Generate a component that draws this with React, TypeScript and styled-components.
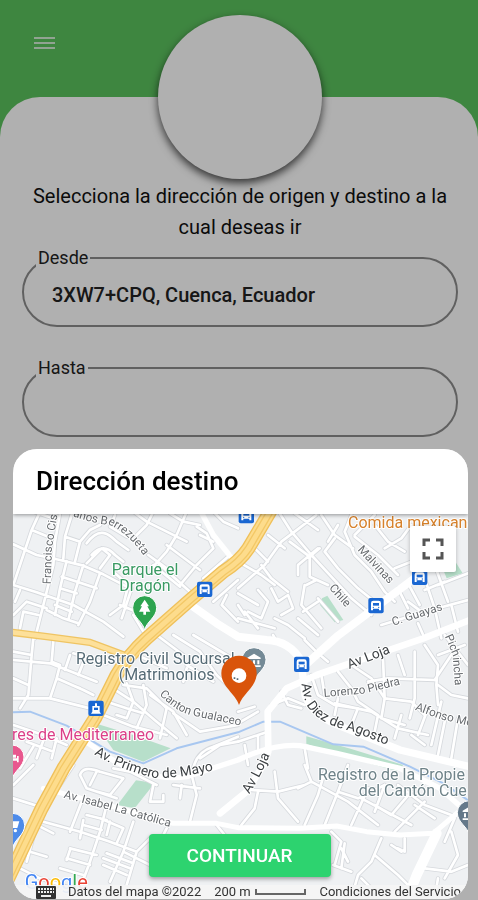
import React from "react";
import styled, { createGlobalStyle } from "styled-components";

const GlobalStyle = createGlobalStyle`
  * { box-sizing: border-box; }
  body {
    margin: 0;
    background: #5bc25e;
    font-family: Roboto, "Liberation Sans", sans-serif;
    color: #000;
  }
`;

const Page = styled.main`
  min-height: 100vh;
  display: flex;
  flex-direction: column;
`;

const TopBar = styled.header`
  height: 97px;
  padding: 31px 32px;
`;

const MenuButton = styled.button`
  display: flex;
  padding: 0;
  border: 0;
  background: none;
  color: #d3ecd4;
`;

const Sheet = styled.section`
  flex: 1;
  display: flex;
  flex-direction: column;
  align-items: center;
  padding: 0 20px 24px 22px;
  background: #fff;
  border-radius: 40px 40px 0 0;
`;

const Avatar = styled.div`
  width: 164px;
  height: 164px;
  margin-top: -82px;
  border-radius: 50%;
  background: #fff;
  box-shadow: 0 4px 8px rgba(0, 0, 0, 0.7);
`;

const Prompt = styled.p`
  margin: 2px 0 4px;
  font-size: 20px;
  line-height: 31px;
  text-align: center;
  color: #111;
`;

const Field = styled.fieldset`
  width: 100%;
  height: 80px;
  margin: 0 0 30px;
  padding: 0 12px;
  border: 2px solid #8c8c8c;
  border-radius: 36px;
`;

const FieldName = styled.legend`
  height: 22px;
  padding: 0 2px;
  color: #222;
  font-size: 18px;
  line-height: 22px;
`;

const FieldInput = styled.input`
  width: 100%;
  height: 52px;
  padding: 0 16px;
  border: 0;
  outline: 0;
  background: transparent;
  color: #222;
  font: 500 20px Roboto, "Liberation Sans", sans-serif;
`;

const Backdrop = styled.div`
  position: fixed;
  inset: 0;
  display: flex;
  flex-direction: column;
  justify-content: flex-end;
  padding: 0 10px 1px 13px;
  background: rgba(0, 0, 0, 0.31);
`;

const Dialog = styled.div`
  height: 50vh;
  display: flex;
  flex-direction: column;
  overflow: hidden;
  border-radius: 24px;
  background: #fff;
`;

const DialogHeader = styled.header`
  position: relative;
  z-index: 1;
  flex: none;
  padding: 16px 23px;
  background: #fff;
  box-shadow: 0 1px 4px rgba(0, 0, 0, 0.4);
`;

const DialogTitle = styled.h1`
  margin: 0;
  font-size: 26px;
  line-height: 33px;
  font-weight: 500;
`;

const MapArea = styled.div`
  position: relative;
  flex: 1;
  min-height: 0;
`;

const MapCanvas = styled.svg`
  display: block;
  width: 100%;
  height: 100%;
`;

const FullscreenButton = styled.button`
  position: absolute;
  top: 12px;
  right: 12px;
  display: flex;
  align-items: center;
  justify-content: center;
  width: 46px;
  height: 46px;
  padding: 0;
  border: 0;
  border-radius: 2px;
  background: #fff;
  box-shadow: 0 1px 4px rgba(0, 0, 0, 0.25);
`;

const ContinueButton = styled.button`
  position: absolute;
  bottom: 22px;
  left: 50%;
  width: 182px;
  height: 43px;
  margin-left: -92px;
  border: 0;
  border-radius: 4px;
  background: #2dd36f;
  color: #fff;
  font: 500 19px Roboto, "Liberation Sans", sans-serif;
  box-shadow: 0 2px 4px rgba(0, 0, 0, 0.35);
`;

const Attribution = styled.footer`
  position: absolute;
  right: 0;
  bottom: 0;
  left: 0;
  display: flex;
  align-items: center;
  height: 14px;
  padding: 0 7px 0 23px;
  background: rgba(245, 245, 245, 0.92);
  color: #333;
  font-size: 13px;
  line-height: 14px;
  white-space: nowrap;
`;

const Credits = styled.span`
  margin-left: 12px;
`;

const Scale = styled.span`
  display: flex;
  align-items: center;
  gap: 4px;
  margin-left: 13px;
`;

const ScaleBar = styled.span`
  width: 51px;
  height: 6px;
  border: 2px solid #666;
  border-top: 0;
`;

const Terms = styled.a`
  margin-left: auto;
  color: inherit;
  text-decoration: none;
`;

const Label = styled.text<{ $tone?: string; $size?: number }>`
  font-family: Roboto, "Liberation Sans", sans-serif;
  font-size: ${(p) => p.$size ?? 35}px;
  fill: ${(p) => p.$tone ?? "#666a6e"};
  stroke: #fff;
  stroke-width: 6px;
  stroke-linejoin: round;
  paint-order: stroke;
`;

/* Minor streets, grouped by the district whose origin they are measured from. */
const districts = [
  {
    x: 0,
    y: 0,
    d: `M120 20L95 75 40 240 M40 118L110 150 180 165 250 182 310 208 390 250
      M180 25L165 110 160 180 130 300 105 400 M95 75L145 95 M100 20L160 40
      M40 240L110 262 220 300 310 350 370 395 M200 168L180 250 165 330 M250 180L225 260 205 345 M300 205L270 290 235 360
      M185 215L245 235 290 250 M180 250L230 265 M165 300L215 320
      M215 30L195 95 190 160 M195 95L240 110 270 75 300 60 M240 110L225 170
      M260 115C300 60 330 90 350 110L385 135 M275 150Q310 110 345 150L370 170 M260 175L305 130 330 150 300 190
      M345 30L330 65 380 95 M400 20L440 50 500 80 560 110 M460 20L440 60 410 90
      M560 20L530 90 500 140 455 190 M600 60L550 50 510 25 M590 65L620 85 640 130 590 180 540 240
      M640 110L600 90 M690 150L610 220 M500 120L600 195 M470 170L570 260 M445 150L500 190 M540 245L460 180
      M345 205L385 240 370 300 330 330 M360 300L420 325 M395 250L365 340 M400 330L430 380
      M40 330L80 290 140 310 M60 255L45 290 M140 315L190 340 235 355 M60 370L70 320 115 330
      M640 20L670 50 714 70 M640 290L714 225 M680 270L665 300 714 350`,
  },
  {
    x: 714,
    y: 0,
    d: `M125 25L160 80 220 150 280 215 340 280 400 330 M170 25L240 75 M235 30L170 80 130 110 80 180 0 250
      M0 170L70 210 110 240 M40 120L90 170 M90 90L140 130 M70 180L100 220 150 260
      M155 110L215 155 215 215 270 240 M180 210L180 180 240 130 M245 130L215 155 M205 240L235 225
      M250 30L290 90 345 130 M300 60L270 110 M340 30L320 80 350 150 400 200 440 260 470 290
      M290 100L260 140 300 190 360 250 410 290 M350 90L410 30 M350 95L420 150 480 210
      M440 130L490 100 520 60 M410 60L450 110 500 140 M470 190L520 170 M480 250L510 310 M510 235L545 300
      M200 240L190 300 250 370 M195 320L240 290 M240 280L300 350 M60 255L90 290 70 340 30 320 M100 250L120 290 150 270 165 310 130 330
      M0 265L60 300 M0 300L20 330 M20 320L60 370 M110 340L150 360 200 400 M180 340L240 390 M0 340L110 370
      M430 360L560 320 690 285 M560 220L590 310 M590 180L630 290 M600 240L690 205 M560 255L620 230
      M590 310L610 400 M510 290L550 320 M540 355L560 400 M640 300L660 380`,
  },
  {
    x: 0,
    y: 390,
    d: `M100 10L95 60 85 180 M160 20L155 80 180 90 170 130 150 190 M40 75L150 85 290 140 M40 190L150 190 270 220
      M170 130L250 165 280 180 M210 60L195 105 M215 150L240 160 M220 55L320 85 M255 70L235 120 M95 60L40 50
      M40 130L85 150 M85 180L60 220 M330 155L400 200 470 260 530 310 M380 145L400 200 380 250 350 240
      M320 200L380 220 430 235 M430 150L440 210 410 280 M450 180L520 230 560 300 M500 220L480 310 M370 150L440 160 500 220
      M310 240L400 275 500 300 M520 235L600 290 714 270 M520 0L600 50 650 120 714 180 M580 0L714 80
      M560 90L640 140 M560 100L550 140 M470 0L550 60 M410 60L500 100
      M40 270L130 300 200 330 M140 290L110 370 M80 320L160 350 M100 335L60 400 M170 310L155 370
      M600 370L660 330 714 320 M580 400Q590 350 640 335L714 305`,
  },
  {
    x: 714,
    y: 390,
    d: `M120 25L105 0 M240 55L200 15 M270 80L240 55 M220 120L240 180 290 210 360 220 M250 120L260 180
      M300 110L340 160 360 200 420 240 M340 90L400 130 440 190 M390 140L450 130 590 135 M435 70L440 190 430 250
      M480 60L500 120 M530 50L530 190 515 250 M560 30L600 90 595 150 600 210 M440 190L520 200 560 240
      M300 190L290 240 M360 220L340 270 M290 205L400 230 480 280 570 300 M420 240L410 290 M490 240L470 310 M570 220L540 300
      M430 250L500 270 M610 200L580 330 M600 150L640 180 690 190 M590 135L640 60 M600 60L680 30 M620 0L690 90
      M0 265L60 230 M0 230L50 215 M100 210L150 190 200 210 M130 170L150 210 190 220 M0 320L90 290 M20 330L30 390 M60 300L60 350
      M200 340L210 400 M520 300L560 330 M620 260L600 360 M660 250L640 370`,
  },
  {
    x: 0,
    y: 780,
    d: `M40 60L100 0 M40 100L120 125 M220 0L180 60 M130 170L240 200 330 230 410 260
      M240 30Q250 0 300 20L370 40 330 90 290 80 M240 30L260 70 350 100 M290 20L270 60 M340 10L390 20 470 60
      M460 60L450 110 490 110 490 90 M520 60L600 70 M545 60L540 100 M570 10L590 90 570 170
      M245 110L210 200 M320 120L300 200 270 290 240 370 M260 150L320 165 M250 180L305 195 M250 165L240 220
      M300 160L370 190 350 235 M330 170L320 210 M400 170L370 260 330 350 M210 250L290 270 M200 280L270 300 M180 310L250 330 M210 255L200 285
      M310 280L390 310 M320 265L400 295 M310 300L380 330 M370 260L450 300 M450 220L410 260 380 360 M90 260L140 275 M100 215L80 290 M60 310L120 340 200 365
      M120 185L160 205 M650 180L690 230 M500 190L480 230`,
  },
  {
    x: 714,
    y: 780,
    d: `M40 75L120 80 200 60 M110 20L120 100 180 170 M60 80L50 130 10 180 M200 0L220 50 330 110 420 180
      M220 50L180 70 M260 20L240 90 200 180 M330 0L300 80 260 180 M300 80L360 100 440 60 M390 70L340 180
      M440 60L410 140 M410 120L460 150 520 80 M370 100L520 180 M480 60L560 120 640 150 M560 110L470 200
      M530 120L590 160 M430 220L400 290 360 330 340 400 M280 200L310 230 290 300 M310 250L330 290 M320 235L310 310 M285 300L340 320
      M410 270L480 330 520 370 M500 220L500 260 480 250 M490 260L460 240 M560 310L640 320 690 300 M640 200L660 270 620 340
      M370 340L430 400 M600 340L590 400 M650 160L620 230`,
  },
];

const avenues = [
  { w: 16, d: "M600 15L640 90 700 165" },
  { w: 24, d: "M580 305L650 355 714 395 800 405Q870 408 905 470" },
  { w: 24, d: "M905 490L1010 395 1110 320 1250 215 1310 160" },
  { w: 20, d: "M660 925L740 860 790 780 805 740 803 620 860 550 950 510 1050 475 1270 400 1410 345" },
  { w: 22, d: "M905 480L915 570Q930 620 1000 655L1200 735 1410 785" },
  { w: 16, d: "M230 690L330 760Q450 830 560 815L714 765Q820 715 900 722L1010 745 1200 790 1320 850 1410 930" },
  { w: 15, d: "M130 850L340 905 520 955 650 955 714 968 900 970 1010 963 1100 980 1200 990 1300 985 1400 900" },
  { w: 30, d: "M1310 985L1250 1110 1215 1200" },
];

const mainRoad = "M822 0L745 130Q720 168 670 200L570 285 440 400Q385 450 350 510L285 640 190 790 125 910 25 1120";
const sideRoad = "M20 380L140 395 270 412 385 455";
const laneLines = "M812 0L738 125Q712 165 663 196L564 279 434 393Q378 445 343 506L278 636 183 786 118 906 18 1116 M832 0L753 136Q728 174 678 207L577 292 447 408Q392 457 358 515L293 645 198 795 133 915 33 1125";
const river = "M20 622L90 620 200 662 330 740 430 775 530 730 714 682 790 650 840 650 1000 718 1090 725 1230 785 1330 835 1410 890";

const parks = [
  "M285 655L400 690 512 730 430 770 340 735Z",
  "M919 694L1054 732 1210 780 1190 798 1000 745 919 716Z",
  "M408 826L464 834 404 910 352 900Z",
  "M966 280L982 272 1030 345 1004 352 960 300Z",
  "M1350 145L1388 205 1340 220 1330 195Z",
];

const stops = [
  [614, 253],
  [739, 32],
  [1259, 217],
  [1128, 302],
  [905, 478],
];

const BusStop = ({ x, y }: { x: number; y: number }) => (
  <g transform={`translate(${x} ${y})`}>
    <rect x="-23" y="-23" width="46" height="46" rx="6" fill="#1a67d2" />
    <path d="M-15 14V-8Q-15-15-8-15H8Q15-15 15-8V14H9V9H-9V14Z" fill="#fff" />
    <path d="M-9-8H9V0H-9Z" fill="#1a67d2" />
    <circle cx="-8" cy="5" r="2" fill="#1a67d2" />
    <circle cx="8" cy="5" r="2" fill="#1a67d2" />
  </g>
);

const PlacePin = ({ x, y, tone, children }: { x: number; y: number; tone: string; children: React.ReactNode }) => (
  <g transform={`translate(${x} ${y})`}>
    <path
      d="M0 66C-4 40-36 28-36-2A36 36 0 0 1 36-2C36 28 4 40 0 66Z"
      fill={tone}
      stroke="#fff"
      strokeWidth="3"
    />
    {children}
  </g>
);

const CityMap = () => (
  <MapCanvas viewBox="39 27 1365 1155" preserveAspectRatio="xMidYMid slice" role="img" aria-label="Mapa de Cuenca">
    <defs>
      <path id="francisco" d="M152 238L156 130 180 -15" />
      <path id="berrezueta" d="M218 34Q280 55 330 60Q400 95 445 175" />
      <path id="malvinas" d="M1072 135L1190 262" />
      <path id="chile" d="M986 250L1056 328" />
      <path id="guayas" d="M1180 362L1350 308" />
      <path id="loja" d="M1048 492L1190 436" />
      <path id="piedra" d="M972 576L1090 566 1220 534" />
      <path id="pichincha" d="M1334 394L1358 450 1366 560" />
      <path id="alfonso" d="M1244 614L1320 642 1450 672" />
      <path id="agosto" d="M905 536Q912 600 935 620Q970 660 1060 680L1200 736" />
      <path id="gualaceo" d="M478 568Q530 625 590 634L750 668" />
      <path id="mayo" d="M282 748Q350 790 460 818Q520 825 690 785" />
      <path id="lojasur" d="M748 868Q790 800 820 725" />
      <path id="catolica" d="M190 878L340 918 560 980" />
    </defs>

    <rect x="0" y="0" width="1440" height="1200" fill="#eff1f3" />
    {parks.map((d) => (
      <path key={d} d={d} fill="#b7dfca" />
    ))}
    <g fill="none" strokeLinejoin="round" strokeLinecap="round">
      {districts.map((t) => (
        <path key={t.d} d={t.d} transform={`translate(${t.x} ${t.y})`} stroke="#d6d9dd" strokeWidth="13" />
      ))}
      {districts.map((t) => (
        <path key={t.d} d={t.d} transform={`translate(${t.x} ${t.y})`} stroke="#fff" strokeWidth="8" />
      ))}
      <path d={river} stroke="#a8c7f0" strokeWidth="6" />
      {avenues.map((a) => (
        <path key={a.d} d={a.d} stroke="#fff" strokeWidth={a.w} />
      ))}
      <path d={sideRoad} stroke="#efc463" strokeWidth="22" />
      <path d={mainRoad} stroke="#efc05a" strokeWidth="42" />
      <path d={sideRoad} stroke="#fde09a" strokeWidth="14" />
      <path d={mainRoad} stroke="#fddc8c" strokeWidth="34" />
      <path d={laneLines} stroke="#f3c867" strokeWidth="4" />
    </g>

    <Label><textPath href="#francisco">Francisco Cis</textPath></Label>
    <Label><textPath href="#berrezueta">anos Berrezueta</textPath></Label>
    <Label><textPath href="#malvinas">Malvinas</textPath></Label>
    <Label><textPath href="#chile">Chile</textPath></Label>
    <Label><textPath href="#guayas">C. Guayas</textPath></Label>
    <Label><textPath href="#piedra">Lorenzo Piedra</textPath></Label>
    <Label><textPath href="#pichincha">Pichincha</textPath></Label>
    <Label><textPath href="#alfonso">Alfonso Mo</textPath></Label>
    <Label><textPath href="#gualaceo">Canton Gualaceo</textPath></Label>
    <Label><textPath href="#catolica">Av. Isabel La Católica</textPath></Label>
    <Label $size={41} $tone="#3c4043"><textPath href="#loja">Av Loja</textPath></Label>
    <Label $size={41} $tone="#3c4043"><textPath href="#agosto">Av. Diez de Agosto</textPath></Label>
    <Label $size={41} $tone="#3c4043"><textPath href="#mayo">Av. Primero de Mayo</textPath></Label>
    <Label $size={41} $tone="#3c4043"><textPath href="#lojasur">Av Loja</textPath></Label>

    <Label $size={48} $tone="#3a9a63" textAnchor="middle" x="435" y="210">Parque el</Label>
    <Label $size={48} $tone="#3a9a63" textAnchor="middle" x="435" y="258">Dragón</Label>
    <Label $size={48} $tone="#d6812b" x="1044" y="70">Comida mexicana</Label>
    <Label $size={48} $tone="#566b76" x="228" y="478">Registro Civil Sucursal</Label>
    <Label $size={48} $tone="#566b76" x="356" y="526">(Matrimonios</Label>
    <Label $size={48} $tone="#db3f88" x="36" y="704">res de Mediterraneo</Label>
    <Label $size={48} $tone="#6f8389" x="954" y="824">Registro de la Propie</Label>
    <Label $size={48} $tone="#6f8389" x="1076" y="872">del Cantón Cue</Label>

    {stops.map(([x, y]) => (
      <BusStop key={`${x}-${y}`} x={x} y={y} />
    ))}
    <g transform="translate(288 610)">
      <rect x="-23" y="-23" width="46" height="46" rx="6" fill="#1a67d2" />
      <path d="M-11 10V-7H-3V-15H3V-7H11V10L15 16H-15Z" fill="#fff" />
      <path d="M-6-2H6V5H-6Z" fill="#1a67d2" />
    </g>

    <PlacePin x={434} y={310} tone="#2da44f">
      <path d="M0-26L13-6H8L17 10H4V19H-4V10H-17L-8-6H-13Z" fill="#fff" />
    </PlacePin>
    <PlacePin x={762} y={466} tone="#748a96">
      <path d="M-20-8L0-20 20-8V-4H-20Z M-16 0H-10V12H-16Z M-3 0H3V12H-3Z M10 0H16V12H10Z M-20 15H20V20H-20Z" fill="#fff" />
    </PlacePin>
    <PlacePin x={36} y={758} tone="#e8578e">
      <path d="M-20 14V-13H-15V2H15V-5H20V14H15V9H-15V14Z M-10-9H12V0H-10Z" fill="#fff" />
    </PlacePin>
    <PlacePin x={38} y={963} tone="#4d8bea">
      <path d="M-20-14H20L14 6H-14Z" fill="#fff" />
      <circle cx="8" cy="14" r="5" fill="#fff" />
    </PlacePin>
    <PlacePin x={1408} y={925} tone="#65798a">
      <path d="M-20-8L0-20 20-8V-4H-20Z M-16 0H-10V12H-16Z M-3 0H3V12H-3Z M-20 15H20V20H-20Z" fill="#fff" />
    </PlacePin>

    <path
      d="M717 600C706 566 664 545 664 505A53 53 0 0 1 770 505C770 545 728 566 717 600Z"
      fill="#d9540b"
    />
    <circle cx="717" cy="512" r="22" fill="#fff" />
    <path d="M701 517h5v5h-5Z M710 520h5v5h-5Z" fill="#566b76" />

    <Label $size={60} x="74" y="1152" aria-label="Google">
      <tspan fill="#4285f4">G</tspan>
      <tspan fill="#ea4335">o</tspan>
      <tspan fill="#fbbc05">o</tspan>
      <tspan fill="#4285f4">g</tspan>
      <tspan fill="#34a853">l</tspan>
      <tspan fill="#ea4335">e</tspan>
    </Label>
  </MapCanvas>
);

const KeyboardIcon = () => (
  <svg width="20" height="13" viewBox="0 0 20 13" aria-hidden="true">
    <rect width="20" height="13" rx="1" fill="#333" />
    <path d="M2 3h16M2 6h16" stroke="#eee" strokeWidth="2" strokeDasharray="2 1" />
    <path d="M5 10h10" stroke="#eee" strokeWidth="2" />
  </svg>
);

export default function App() {
  return (
    <>
      <GlobalStyle />
      <Page>
        <TopBar>
          <MenuButton aria-label="Menú">
            <svg width="25" height="25" viewBox="0 0 25 25" fill="none" stroke="currentColor" strokeWidth="2" aria-hidden="true">
              <path d="M2 7H23M2 12H23M2 17H23" />
            </svg>
          </MenuButton>
        </TopBar>
        <Sheet>
          <Avatar />
          <Prompt>Selecciona la dirección de origen y destino a la cual deseas ir</Prompt>
          <Field>
            <FieldName><label htmlFor="origin">Desde</label></FieldName>
            <FieldInput id="origin" defaultValue="3XW7+CPQ, Cuenca, Ecuador" />
          </Field>
          <Field>
            <FieldName><label htmlFor="destination">Hasta</label></FieldName>
            <FieldInput id="destination" />
          </Field>
        </Sheet>
      </Page>
      <Backdrop>
        <Dialog role="dialog" aria-modal="true" aria-labelledby="dialog-title">
          <DialogHeader>
            <DialogTitle id="dialog-title">Dirección destino</DialogTitle>
          </DialogHeader>
          <MapArea>
            <CityMap />
            <FullscreenButton aria-label="Pantalla completa">
              <svg width="22" height="22" viewBox="0 0 22 22" fill="none" stroke="#555" strokeWidth="3" aria-hidden="true">
                <path d="M2 8V2H8M14 2H20V8M20 14V20H14M8 20H2V14" />
              </svg>
            </FullscreenButton>
            <Attribution>
              <KeyboardIcon />
              <Credits>Datos del mapa ©2022</Credits>
              <Scale>200 m <ScaleBar /></Scale>
              <Terms href="#condiciones">Condiciones del Servicio</Terms>
            </Attribution>
            <ContinueButton>CONTINUAR</ContinueButton>
          </MapArea>
        </Dialog>
      </Backdrop>
    </>
  );
}
